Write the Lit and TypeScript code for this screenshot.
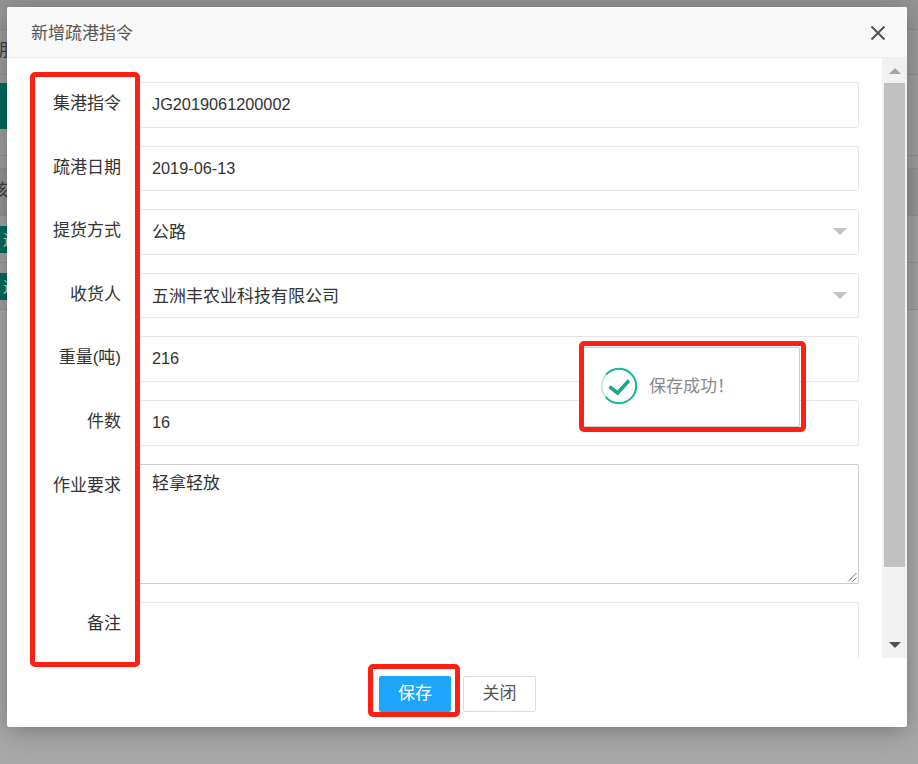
import { LitElement, html, css } from "lit";
import { customElement } from "lit/decorators.js";

@customElement("app-root")
export class AppRoot extends LitElement {
  static styles = css`
    :host { display: block; width: 918px; height: 764px; position: relative; overflow: hidden; background: #ababab; font-family: "Liberation Sans", "Noto Sans CJK SC", sans-serif; }
    * { box-sizing: border-box; }
    .page { display: flex; flex-direction: column; height: 100%; }
    .pr { border-bottom: 1px solid #a2a2a2; display: flex; align-items: center; overflow: hidden; font-size: 17px; color: #3e3e3e; flex: none; }
    .pr span { margin-left: -9px; margin-top: -8px; }
    .r1 { height: 10px; background: #959595; border-bottom: 0; }
    .r2 { height: 20px; background: #979797; border-bottom-color: #8b8b8b; }
    .r3 { height: 45px; background: #9b9b9b; border-bottom-color: #8d8d8d; }
    .r4 { height: 81px; background: #9d9d9d; border-bottom-color: #8f8f8f; }
    .r5 { height: 13px; background: #9d9d9d; border-bottom-color: #8f8f8f; }
    .r6 { height: 47px; background: #949494; border-bottom-color: #8f8f8f; }
    .r7, .r8 { height: 47px; background: #a0a0a0; border-bottom-color: #929292; }
    .r9 { flex: 1; background: #a8a8a8; border: 0; }
    .teal { position: absolute; left: 0; width: 7px; background: #00695c; color: #b9d2ce; font-size: 15px; line-height: 27px; overflow: hidden; }
    .t1 { top: 83px; height: 46px; }
    .t2 { top: 226px; height: 27px; }
    .t3 { top: 273px; height: 27px; }
    .teal span { margin-left: 3px; }

    .modal { position: absolute; left: 7px; top: 7px; width: 900px; height: 720px; background: #fff; border-radius: 2px; box-shadow: 0 4px 24px rgba(0,0,0,.28); display: flex; flex-direction: column; overflow: hidden; }
    .head { height: 51px; flex: none; background: #f8f8f8; border-bottom: 1px solid #eee; display: flex; align-items: center; justify-content: space-between; padding: 0 21px 2px 24px; font-size: 17px; color: #555; }
    .close { width: 16px; height: 16px; display: block; margin-top: 3px; }
    .main { height: 600px; flex: none; display: flex; }
    .form { flex: 1; overflow: hidden; padding: 24px 23px 0 0; display: flex; flex-direction: column; gap: 18px; }
    .row { display: flex; gap: 15px; flex: none; }
    .label { width: 114px; flex: none; text-align: right; font-size: 17px; line-height: 44.8px; color: #333; }
    .field { width: 723px; height: 45.6px; flex: none; border: 1px solid #e6e6e6; border-radius: 2px; padding-left: 15px; font-size: 16.3px; line-height: 43px; color: #333; position: relative; }
    .cjk { font-size: 17px; line-height: 45.6px; }
    .caret { position: absolute; right: 11px; top: 18px; width: 0; height: 0; border-left: 7px solid transparent; border-right: 7px solid transparent; border-top: 7px solid #c2c2c2; }
    .area { height: 120px; border-color: #ccc; line-height: 38px; }
    .grip { position: absolute; right: 1px; bottom: 1px; width: 10px; height: 10px; }
    .last { height: 120px; }
    .bar { width: 25px; flex: none; background: #f1f1f1; position: relative; display: flex; flex-direction: column; align-items: center; }
    .up { height: 25px; flex: none; display: flex; align-items: center; justify-content: center; }
    .tri-u { width: 0; height: 0; border-left: 6px solid transparent; border-right: 6px solid transparent; border-bottom: 6px solid #a3a3a3; }
    .thumb { width: 21px; height: 484px; flex: none; background: #c1c1c1; }
    .down { flex: 1; display: flex; align-items: flex-end; justify-content: center; padding-bottom: 10px; }
    .tri-d { width: 0; height: 0; border-left: 6px solid transparent; border-right: 6px solid transparent; border-top: 6px solid #505050; }
    .foot { flex: 1; display: flex; justify-content: center; gap: 12px; padding: 18px 0 0 1px; }
    .btn { width: 73px; height: 36px; border-radius: 2px; font-size: 17px; line-height: 36px; text-align: center; }
    .save { width: 72px; background: #1ea5fc; color: #fff; }
    .cancel { background: #fff; color: #555; border: 1px solid #ddd; line-height: 34px; }

    .toast { position: absolute; left: 582px; top: 347px; width: 218px; height: 80px; background: #fff; border: 1px solid #ccc; border-radius: 2px; display: flex; align-items: center; gap: 11px; padding: 0 0 3px 17px; font-size: 17px; color: #888; }
    .toast svg { width: 38px; height: 38px; flex: none; }
    .toast span { margin-bottom: 2px; }

    .mark { position: absolute; border: 5px solid #ff2014; border-radius: 5px; }
    .m1 { left: 30px; top: 72px; width: 110px; height: 595px; }
    .m2 { left: 579px; top: 341px; width: 227px; height: 91px; }
    .m3 { left: 368px; top: 664px; width: 92px; height: 53px; }
  `;

  render() {
    return html`
      <div class="page">
        <div class="pr r1"></div>
        <div class="pr r2"></div>
        <div class="pr r3"><span>期</span></div>
        <div class="pr r4"></div>
        <div class="pr r5"></div>
        <div class="pr r6"><span>核</span></div>
        <div class="pr r7"></div>
        <div class="pr r8"></div>
        <div class="pr r9"></div>
      </div>
      <div class="teal t1"></div>
      <div class="teal t2"><span>运</span></div>
      <div class="teal t3"><span>运</span></div>

      <div class="modal">
        <div class="head">
          <span>新增疏港指令</span>
          <svg class="close" viewBox="0 0 16 16"><path d="M1.5 1.5 14.5 14.5M14.5 1.5 1.5 14.5" stroke="#50505c" stroke-width="2" fill="none"/></svg>
        </div>
        <div class="main">
          <div class="form">
            <div class="row"><div class="label">集港指令</div><div class="field">JG2019061200002</div></div>
            <div class="row"><div class="label">疏港日期</div><div class="field">2019-06-13</div></div>
            <div class="row"><div class="label">提货方式</div><div class="field cjk">公路<i class="caret"></i></div></div>
            <div class="row"><div class="label">收货人</div><div class="field cjk">五洲丰农业科技有限公司<i class="caret"></i></div></div>
            <div class="row"><div class="label">重量(吨)</div><div class="field">216</div></div>
            <div class="row"><div class="label">件数</div><div class="field">16</div></div>
            <div class="row"><div class="label">作业要求</div><div class="field cjk area">轻拿轻放
              <svg class="grip" viewBox="0 0 10 10"><path d="M9.5 1 1 9.5M9.5 5.5 5.5 9.5" stroke="#777" fill="none"/></svg></div></div>
            <div class="row"><div class="label">备注</div><div class="field last"></div></div>
          </div>
          <div class="bar">
            <div class="up"><i class="tri-u"></i></div>
            <div class="thumb"></div>
            <div class="down"><i class="tri-d"></i></div>
          </div>
        </div>
        <div class="foot">
          <div class="btn save">保存</div>
          <div class="btn cancel">关闭</div>
        </div>
      </div>

      <div class="toast">
        <svg viewBox="0 0 38 38">
          <circle cx="19" cy="19" r="17.2" fill="none" stroke="#bfe9e0" stroke-width="1.8"/>
          <circle cx="19" cy="19" r="17.2" fill="none" stroke="#18b79a" stroke-width="2" stroke-dasharray="84 24" stroke-dashoffset="-66"/>
          <path d="M9.5 19.7 17.5 26 29 13.5" fill="none" stroke="#16a88f" stroke-width="3.6"/>
        </svg>
        <span>保存成功！</span>
      </div>

      <div class="mark m1"></div>
      <div class="mark m2"></div>
      <div class="mark m3"></div>
    `;
  }
}
